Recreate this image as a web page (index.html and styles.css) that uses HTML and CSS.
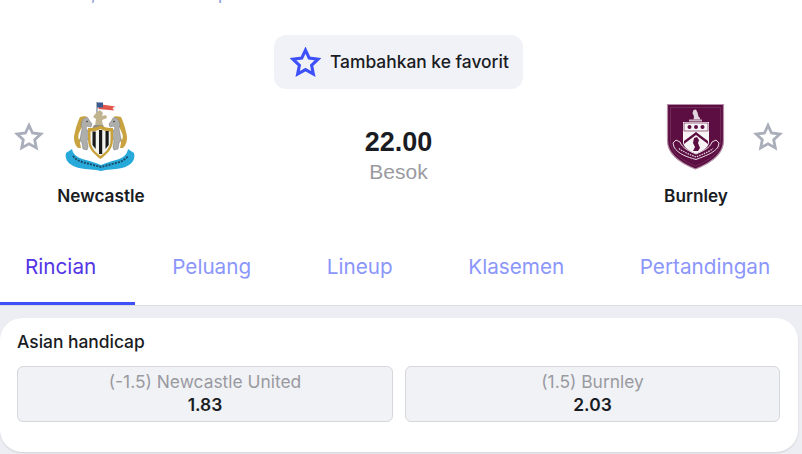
FILE: index.html
```html
<!DOCTYPE html>
<html lang="id">
<head>
<meta charset="utf-8">
<title>Newcastle vs Burnley</title>
<link rel="stylesheet" href="styles.css">
</head>
<body>
<main class="page">
  <div class="cut-line"><span class="cut-comma">,</span><span class="cut-p">p</span></div>
  <div class="fav-row">
    <button class="fav-btn">
      <svg class="fav-star" viewBox="0 0 30 30"><path d="M15 3l3.600 7.800 8.600 1-6.300 5.900 1.700 8.500-7.600-4.300-7.600 4.300 1.700-8.500-6.300-5.900 8.600-1z" fill="none" stroke="#3d50fa" stroke-width="3"/></svg>
      <span class="fav-text">Tambahkan ke favorit</span>
    </button>
  </div>
  <section class="match">
    <svg class="side-star" viewBox="0 0 30 30"><path d="M15 3.4l3.5 7.6 8.3 1-6.1 5.700 1.600 8.200-7.300-4.100-7.300 4.100 1.600-8.200-6.100-5.700 8.300-1z" fill="none" stroke="#a9aeba" stroke-width="2.8"/></svg>
    <div class="team">
      <svg class="crest" viewBox="0 0 72 72">
        <path d="M32 1v25" stroke="#9aa3ad" stroke-width="1.600"/>
        <path d="M33.500 3l17 2.500-3 1.500 1.500 2.500-15.500-1.500z" fill="#e2574c"/>
        <path d="M32 1.500h6v5h-6z" fill="#3a5a92"/>
        <path d="M31 12l4-3 3 3-1 3 4-1 1 3-5 2 1 6h-8l1-7-3-2z" fill="#c0b390"/>
        <path d="M29 24h9l2 4H27z" fill="#8d8d8d"/>
        <g id="seahorse">
          <path d="M15 16c3-1 6-1 8 0l-3 1c-2 1-3 3-3 6 0 4-2 6-3 9-1 2-1 5 0 7l2-3-1 6 1 5h-3c-4-4-5-10-3-16 1-5 3-11 5-15z" fill="#c9a33f"/>
          <path d="M17 20c1-3 4-4 6-3l1 2 3 4-1 3-4-1-1 2 2 3 1 5-2 5 1 6-1 3-4-1-1-6-2-3 1-6 1-5-1-5z" fill="#aeaeac" stroke="#77777a" stroke-width=".5"/>
          <circle cx="22" cy="20.500" r=".8" fill="#333"/>
        </g>
        <use href="#seahorse" transform="translate(71 0) scale(-1 1)"/>
        <path d="M23 27c4 0 9-.5 12.500-2.500C39 26.500 44 27 48 27v12c0 9-7 15-12.500 19C30 54 23 48 23 39z" fill="#c9a23a"/>
        <path d="M25.500 30.500c4 0 7-1 10-2.500 3 1.500 6 2.500 10 2.500v9c0 7-5 12-10 15.500-5-3.500-10-8.500-10-15.500z" fill="#f3f3f0"/>
        <path d="M27.500 30.500h3.200V48l-3.200-4zM34 29h3.200v24L34 53zM40.500 30h3.200v14l-3.200 4z" fill="#191919"/>
        <path d="M1 52l6-4c1 6 6 9 14 11 5 1 10 3 15 5 5-2 10-4 15-5 7-2 11-5 12-11l6 4c2 8-4 13-12 15-8 2-15 1-21 3-6-2-14-1-22-3C6 65-1 60 1 52z" fill="#27a9da"/>
        <path d="M8 55c3 4 8 6 13 7l15 4 15-4c5-1 9-3 12-7" fill="none" stroke="#1d4c68" stroke-width="2" stroke-dasharray="2 1.200"/>
      </svg>
      <div class="team-name">Newcastle</div>
    </div>
    <div class="score">
      <div class="time">22.00</div>
      <div class="day">Besok</div>
    </div>
    <div class="team">
      <svg class="crest" viewBox="0 0 72 72">
        <path d="M7.500 3.500h56v36c0 15-14 23-28 28.500C21.500 62.500 7.500 54.500 7.500 39.500z" fill="#5c0d41" stroke="#b48fa7" stroke-width="1.200"/>
        <path d="M10.500 6.500h50v33c0 13-12 20-25 25.500-13-5.500-25-12.500-25-25.500z" fill="#5c0d41" stroke="#7d3f68" stroke-width=".6"/>
        <path d="M33.500 9l2.500-.5 1.500 3 1 4 1.500 1.500v1.500h-6.500l.5-3-1.500-3.500z" fill="#e3d5dd"/>
        <path d="M29 18.500h13v2H29z" fill="#c7afbd"/>
        <path d="M23 21h26v20c0 5-6 9-13 12-7-3-13-7-13-12z" fill="#f8f4f6"/>
        <path d="M24 22h24v8H24z" fill="#f8f4f6" stroke="#5c0d41" stroke-width=".6"/>
        <circle cx="29.500" cy="26" r="2" fill="#5c0d41"/><circle cx="36" cy="26" r="2" fill="#5c0d41"/><circle cx="42.500" cy="26" r="2" fill="#5c0d41"/>
        <path d="M24 40l12-9 12 9v3l-12-9-12 9z" fill="#5c0d41"/>
        <path d="M34 37l3-1 2 3-1 3 2 5-2 3h-5l2-4-2-4z" fill="#5c0d41"/>
        <path d="M13 42l3-3 4 2c2 6 9 9 16 12 7-3 14-6 16-12l4-2 3 3-1 4c-4 6-13 9-22 12.500C27 56 18 53 14 46z" fill="#5c0d41" stroke="#eadfe5" stroke-width="1"/>
        <path d="M19 47.500c5 4 11 6 17 8.500 6-2.500 12-4.500 17-8.500" fill="none" stroke="#e3d5dd" stroke-width="1.300" stroke-dasharray="1.500 1"/>
      </svg>
      <div class="team-name">Burnley</div>
    </div>
    <svg class="side-star" viewBox="0 0 30 30"><path d="M15 3.4l3.5 7.6 8.3 1-6.1 5.700 1.600 8.200-7.300-4.100-7.300 4.100 1.600-8.200-6.100-5.700 8.300-1z" fill="none" stroke="#a9aeba" stroke-width="2.8"/></svg>
  </section>
  <nav class="tabs">
    <a class="tab active">Rincian</a>
    <a class="tab">Peluang</a>
    <a class="tab">Lineup</a>
    <a class="tab">Klasemen</a>
    <a class="tab">Pertandingan</a>
  </nav>
  <section class="content">
    <div class="card">
      <h2 class="card-title">Asian handicap</h2>
      <div class="odds">
        <div class="odd"><span class="odd-label">(-1.5) Newcastle United</span><strong class="odd-value">1.83</strong></div>
        <div class="odd"><span class="odd-label">(1.5) Burnley</span><strong class="odd-value">2.03</strong></div>
      </div>
    </div>
  </section>
</main>
</body>
</html>
```

FILE: styles.css
```css
* { box-sizing: border-box; }
html, body { margin: 0; height: 100%; }
body { background: #fff; font-family: Inter, "Liberation Sans", sans-serif; color: #1a1c24; overflow: hidden; }
.page { width: 802px; height: 454px; display: flex; flex-direction: column; overflow: hidden; }
.cut-line { height: 3px; overflow: hidden; display: flex; padding-left: 91px; gap: 122px; font-size: 17px; line-height: 20px; color: #8b96d8; }
.cut-line span { display: block; margin-top: -16px; }
.fav-row { display: flex; justify-content: center; padding: 32px 5px 0 0; }
.fav-btn { width: 249px; height: 54px; border: 0; border-radius: 12px; background: #f1f2f7; display: flex; align-items: center; gap: 9px; padding: 0 0 0 16px; font: 500 17.4px Inter, sans-serif; color: #1a1c24; white-space: nowrap; }
.fav-star { width: 31px; height: 31px; flex: none; }
.fav-text { padding-bottom: 2px; }
.match { display: flex; align-items: flex-start; height: 146px; margin-top: -1px; padding: 0 19px 0 14px; }
.side-star { width: 30px; height: 30px; margin-top: 34px; flex: none; }
.team { width: 114px; display: flex; flex-direction: column; align-items: center; padding-top: 13px; }
.crest { width: 72px; height: 72px; display: block; }
.team-name { margin-top: 13px; font-size: 17.2px; font-weight: 600; line-height: 20px; }
.score { flex: 1; display: flex; flex-direction: column; align-items: center; padding-top: 38px; font-family: "Liberation Sans", Arial, sans-serif; }
.time { font-size: 27px; font-weight: 700; line-height: 32px; }
.day { font-size: 21px; line-height: 27px; color: #9a9aa0; }
.tabs { display: flex; height: 72px; border-bottom: 1px solid #dcdee3; }
.tab { padding: 20px 38.6px 0 37px; font-size: 20.7px; line-height: 26px; color: #8b96fb; height: 71px; white-space: nowrap; }
.tab.active { color: #5335e5; border-bottom: 3px solid #3d50fa; padding: 20px 39px 0 25px; }
.content { flex: 1; background: #eceef3; padding: 12px 0 2px; }
.card { height: 134px; width: 798px; background: #fff; border-radius: 22px; padding: 13px 0 0 17px; box-shadow: 0 1px 2px rgba(0,0,0,.12); }
.card-title { margin: 0; font-size: 17.4px; font-weight: 500; line-height: 21px; }
.odds { display: grid; grid-template-columns: 376px 375px; gap: 12px; margin-top: 14px; }
.odd { height: 56px; background: #f1f2f6; border: 1px solid #d6d7dc; border-radius: 6px; display: flex; flex-direction: column; align-items: center; padding-top: 4px; }
.odd-label { font-size: 17.4px; line-height: 21px; color: #999aa0; }
.odd-value { font-size: 17.4px; font-weight: 600; line-height: 26px; }
```
